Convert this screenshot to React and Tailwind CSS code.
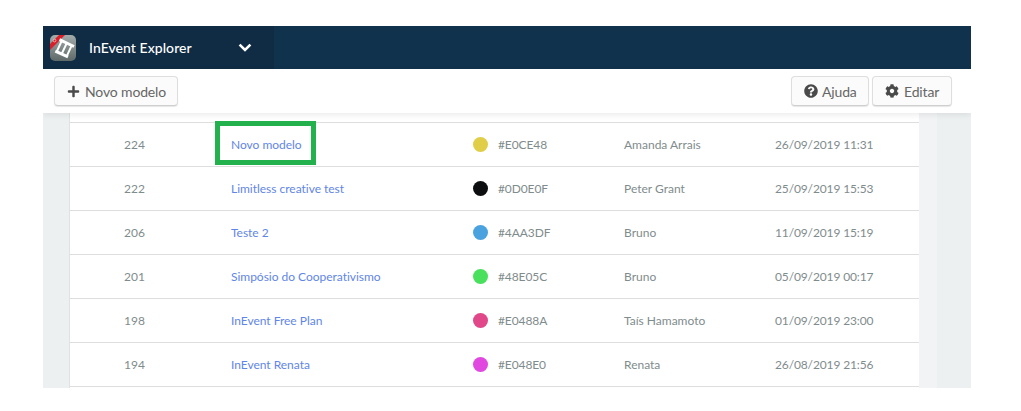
import React from "react";
import { FaPlus, FaQuestionCircle, FaCog } from "react-icons/fa";

const rows = [
  ["224", "Novo modelo", "#E0CE48", "Amanda Arrais", "26/09/2019 11:31", true],
  ["222", "Limitless creative test", "#0D0E0F", "Peter Grant", "25/09/2019 15:53"],
  ["206", "Teste 2", "#4AA3DF", "Bruno", "11/09/2019 15:19"],
  ["201", "Simpósio do Cooperativismo", "#48E05C", "Bruno", "05/09/2019 00:17"],
  ["198", "InEvent Free Plan", "#E0488A", "Taís Hamamoto", "01/09/2019 23:00"],
  ["194", "InEvent Renata", "#E048E0", "Renata", "26/08/2019 21:56"],
];

function Logo() {
  return (
    <svg width="26" height="26" viewBox="0 0 26 26" className="block">
      <defs>
        <linearGradient id="lg" x1="0" y1="0" x2="0" y2="1">
          <stop offset="0" stopColor="#a3abab" />
          <stop offset="1" stopColor="#5f6a68" />
        </linearGradient>
        <clipPath id="lc"><rect width="26" height="26" rx="5" /></clipPath>
      </defs>
      <g clipPath="url(#lc)">
        <rect width="26" height="26" fill="url(#lg)" />
        <path d="M0 9 L9 0 L15 0 L0 15 Z" fill="#d9202a" />
        <circle cx="4.5" cy="5.5" r="1.4" fill="none" stroke="#f3c0c0" strokeWidth="0.8" />
        <g transform="rotate(25 14 14)" fill="none" stroke="#fff">
          <path d="M6 7.5 H22" strokeWidth="3" />
          <path d="M7 19.5 H21" strokeWidth="3" />
          <path d="M8.5 8 V19 M14 8 V19 M19.5 8 V19" strokeWidth="2" />
        </g>
      </g>
    </svg>
  );
}

function Btn({ icon, children, className = "" }) {
  return (
    <button className={"h-[30px] flex items-center rounded-[4px] border border-[#dedede] border-b-[#cfcfcf] bg-[#fbfbfb] text-[14px] tracking-[-0.15px] text-[#666666] shadow-[0_1px_1px_rgba(0,0,0,0.1)] " + className}>
      {icon}
      {children}
    </button>
  );
}

export default function App() {
  return (
    <div className="w-[1021px] h-[411px] bg-white pt-[26px] pl-[43px] overflow-hidden font-['Lato','Open_Sans',sans-serif]">
      <div className="w-[928px] h-[362px] flex flex-col overflow-hidden">
        <header className="h-[43px] shrink-0 bg-[#11324d] flex">
          <div className="w-[231px] bg-[#0f2c44] flex items-center pl-[7px]">
            <Logo />
            <span className="ml-[13px] text-[14px] font-medium tracking-[0.05px] text-white">InEvent Explorer</span>
            <svg width="14" height="9" viewBox="0 0 14 9" className="ml-[46px]">
              <path d="M1.6 1.6 L7 7 L12.4 1.6" fill="none" stroke="#fff" strokeWidth="2.6" />
            </svg>
          </div>
        </header>
        <div className="h-[44px] shrink-0 bg-white flex items-center justify-between pl-[11px] pr-[19px] relative z-10 shadow-[0_2px_6px_rgba(0,0,0,0.08)]">
          <Btn icon={<FaPlus className="text-[13px] text-[#4a4a4a] mr-[5px]" />} className="w-[124px] pl-[12px]">Novo modelo</Btn>
          <div className="flex gap-[3px]">
            <Btn icon={<FaQuestionCircle className="text-[14px] text-[#4a4a4a] mr-[4px]" />} className="w-[78px] pl-[12px]">Ajuda</Btn>
            <Btn icon={<FaCog className="text-[14px] text-[#4a4a4a] mr-[5px]" />} className="w-[80px] pl-[12px]">Editar</Btn>
          </div>
        </div>
        <div className="flex-1 bg-[#ecf0f1] flex overflow-hidden">
          <div className="w-[26px] shrink-0" />
          <div className="w-[850px] shrink-0 bg-white border-l border-[#dfe2e3] pt-[9px] self-stretch">
            <div className="border-t border-[#dedede]">
              {rows.map((r) => (
                <div key={r[0]} className="relative h-[44px] border-b border-[#dedede] grid grid-cols-[129px_274px_151px_151px_1fr] items-center text-[12px] text-[#7f8c8d]">
                  <div className="text-center">{r[0]}</div>
                  <div className="pl-[32px] text-[#5f86e6] tracking-[-0.02px]">{r[1]}</div>
                  <div className="flex items-center">
                    <span className="w-[15px] h-[15px] rounded-full" style={{ backgroundColor: r[2] }} />
                    <span className="ml-[10px] tracking-[-0.1px]">{r[2]}</span>
                  </div>
                  <div>{r[3]}</div>
                  <div className="tracking-[-0.13px]">{r[4]}</div>
                  {r[5] && <div className="absolute left-[145px] top-[-2px] w-[101px] h-[44px] border-[5px] border-[#22b14c]" />}
                </div>
              ))}
            </div>
          </div>
          <div className="w-[18px] shrink-0 bg-[#f1f3f4]" />
        </div>
      </div>
    </div>
  );
}
